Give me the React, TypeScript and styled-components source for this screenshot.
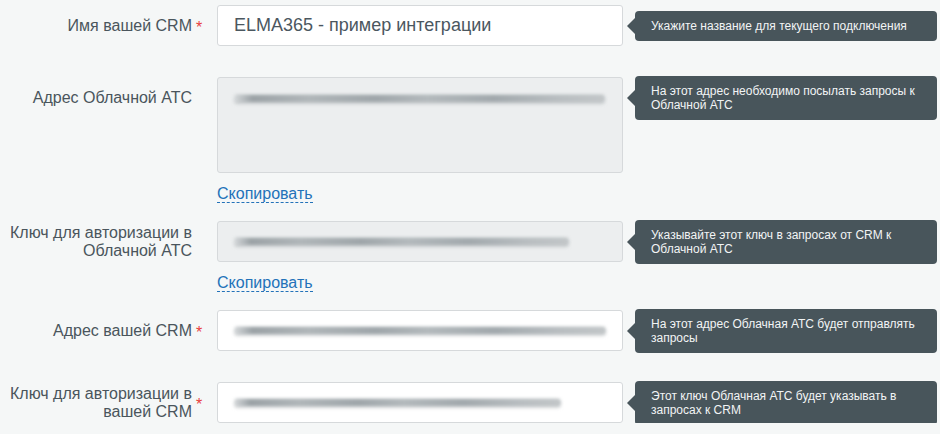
import React from "react";
import styled, { createGlobalStyle } from "styled-components";

const GlobalStyle = createGlobalStyle`
  html, body { margin: 0; padding: 0; background: #f5f7f7; }
  body { font-family: "Liberation Sans", Arial, sans-serif; }
  * { box-sizing: border-box; }
`;

const Form = styled.form`
  padding-top: 5px;
  width: 940px;
`;

const Group = styled.div<{ $gap: number }>`
  display: grid;
  grid-template-columns: 192px 25px 406px 314px;
  align-items: start;
  margin-bottom: ${(p) => p.$gap}px;
`;

const Label = styled.label`
  min-height: 41px;
  display: flex;
  align-items: center;
  justify-content: flex-end;
  text-align: right;
  font-size: 16px;
  line-height: 18px;
  color: #4a555c;
`;

const StarCell = styled.div`
  height: 41px;
  display: flex;
  align-items: center;
  padding: 4px 0 0 4px;
  color: #e8403d;
  font-size: 16px;
  line-height: 18px;
`;

const FieldCol = styled.div`
  display: flex;
  flex-direction: column;
`;

const TextInput = styled.input`
  height: 41px;
  width: 100%;
  border: 1px solid #d6d9db;
  border-radius: 3px;
  background: #fff;
  padding: 0 16px;
  font-family: "Liberation Sans", Arial, sans-serif;
  font-size: 18px;
  color: #4b575f;
  outline: none;
`;

const Box = styled.div<{ $readOnly?: boolean; $tall?: boolean }>`
  height: ${(p) => (p.$tall ? 96 : 41)}px;
  border: 1px solid #d6d9db;
  border-radius: 3px;
  background: ${(p) => (p.$readOnly ? "#eceeef" : "#fff")};
  padding: ${(p) => (p.$tall ? "17px 16px 0" : "0 16px")};
  display: flex;
  align-items: ${(p) => (p.$tall ? "flex-start" : "center")};
`;

const Smudge = styled.div`
  height: 7px;
  border-radius: 4px;
  background: linear-gradient(
    90deg,
    #d6d9db 0%,
    #9ba2a6 5%,
    #b0b6b9 20%,
    #9fa6aa 38%,
    #b3b9bc 52%,
    #a2a9ad 70%,
    #b9bec1 88%,
    #c2c6c8 100%
  );
  filter: blur(1.4px);
  box-shadow: 0 2px 2px rgba(150, 158, 162, 0.45), 0 -1px 1px rgba(150, 158, 162, 0.3);
`;

const LinkRow = styled.div`
  margin-top: 10px;
  font-size: 16px;
  line-height: 22px;
`;

const CopyLink = styled.a`
  color: #2372b9;
  text-decoration: none;
  border-bottom: 1px dashed #2372b9;
  cursor: pointer;
`;

const TipCell = styled.div`
  height: 41px;
  display: flex;
  align-items: center;
  padding-left: 12px;
`;

const Tip = styled.div`
  position: relative;
  width: 302px;
  background: #48555b;
  color: #f2f4f5;
  font-size: 12px;
  line-height: 14px;
  padding: 8px 16px;
  border-radius: 4px;
  &::before {
    content: "";
    position: absolute;
    left: -8px;
    top: 50%;
    margin-top: -8px;
    border-style: solid;
    border-width: 8px 8px 8px 0;
    border-color: transparent #48555b transparent transparent;
  }
`;

type Row = {
  label: string;
  required?: boolean;
  tip: string;
  value?: string;
  smudge?: number;
  readOnly?: boolean;
  tall?: boolean;
  copy?: boolean;
  gap: number;
};

const rows: Row[] = [
  {
    label: "Имя вашей CRM",
    required: true,
    value: "ELMA365 - пример интеграции",
    tip: "Укажите название для текущего подключения",
    gap: 31,
  },
  {
    label: "Адрес Облачной АТС",
    smudge: 371,
    readOnly: true,
    tall: true,
    copy: true,
    tip: "На этот адрес необходимо посылать запросы к Облачной АТС",
    gap: 16,
  },
  {
    label: "Ключ для авторизации в Облачной АТС",
    smudge: 335,
    readOnly: true,
    copy: true,
    tip: "Указывайте этот ключ в запросах от CRM к Облачной АТС",
    gap: 16,
  },
  {
    label: "Адрес вашей CRM",
    required: true,
    smudge: 376,
    tip: "На этот адрес Облачная АТС будет отправлять запросы",
    gap: 31,
  },
  {
    label: "Ключ для авторизации в вашей CRM",
    required: true,
    smudge: 327,
    tip: "Этот ключ Облачная АТС будет указывать в запросах к CRM",
    gap: 0,
  },
];

export default function App() {
  return (
    <>
      <GlobalStyle />
      <Form onSubmit={(e) => e.preventDefault()}>
        {rows.map((r) => (
          <Group key={r.label} $gap={r.gap}>
            <Label>{r.label}</Label>
            <StarCell>{r.required ? "*" : ""}</StarCell>
            <FieldCol>
              {r.value !== undefined ? (
                <TextInput defaultValue={r.value} />
              ) : (
                <Box $readOnly={r.readOnly} $tall={r.tall}>
                  <Smudge style={{ width: r.smudge }} />
                </Box>
              )}
              {r.copy && (
                <LinkRow>
                  <CopyLink>Скопировать</CopyLink>
                </LinkRow>
              )}
            </FieldCol>
            <TipCell>
              <Tip>{r.tip}</Tip>
            </TipCell>
          </Group>
        ))}
      </Form>
    </>
  );
}
